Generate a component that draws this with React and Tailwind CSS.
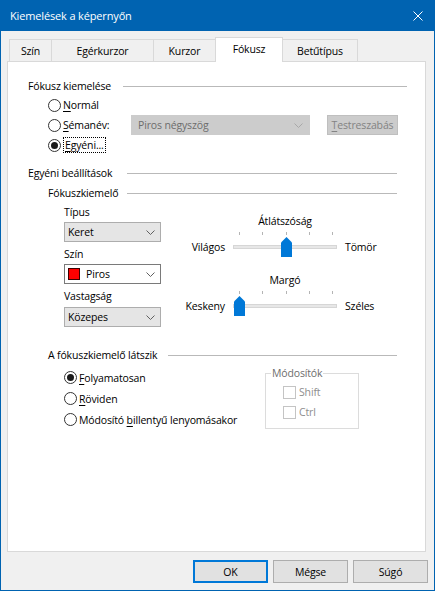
import React from "react";

function U({ children }) {
  return <span className="underline decoration-1 underline-offset-[2px]">{children}</span>;
}

function Chevron({ color = "#606060" }) {
  return (
    <svg width="9" height="5" viewBox="0 0 9 5" className="shrink-0">
      <path d="M0.5 0.5L4.5 4.5L8.5 0.5" fill="none" stroke={color} strokeWidth="1" />
    </svg>
  );
}

function Radio({ checked, children }) {
  return (
    <div className="flex items-center whitespace-nowrap">
      <span className="flex h-[13px] w-[13px] shrink-0 items-center justify-center rounded-full border border-[#333333] bg-white">
        {checked && <span className="h-[7px] w-[7px] rounded-full bg-[#1a1a1a]" />}
      </span>
      <span className="ml-[2px]">{children}</span>
    </div>
  );
}

function Header({ children, width, labelWidth, className = "" }) {
  return (
    <div className={`flex h-4 items-center ${width} ${className}`}>
      <span className={`shrink-0 whitespace-nowrap ${labelWidth}`}>{children}</span>
      <span className="h-px flex-1 bg-[#b9b9b9]" />
    </div>
  );
}

function Combo({ children, white }) {
  return (
    <div
      className={`flex h-[20px] w-[97px] items-center justify-between border pl-[3px] pr-[5px] ${
        white ? "border-[#7a7a7a] bg-white" : "border-[#adadad] bg-[#e5e5e5]"
      }`}
    >
      <div className="flex items-center">{children}</div>
      <Chevron />
    </div>
  );
}

function Slider({ label, left, right, pos }) {
  return (
    <div className="grid grid-cols-[50px_104px_auto] gap-x-2 whitespace-nowrap">
      <div />
      <div className="h-4 text-center">{label}</div>
      <div />
      <div />
      <div className="mt-[3px] flex h-[3px] justify-between pl-[6px] pr-[4px]">
        {[0, 1, 2, 3, 4].map((t) => (
          <span key={t} className="h-[3px] w-px bg-[#b4b4b4]" />
        ))}
      </div>
      <div />
      <div className="mt-[2px] flex h-[20px] items-center justify-end">{left}</div>
      <div className="relative mt-[2px] flex h-[20px] items-center">
        <div className="h-[4px] w-full border border-[#d6d6d6] bg-[#e7e7e7]" />
        <svg
          width="11"
          height="20"
          viewBox="0 0 11 20"
          className="absolute top-0"
          style={{ left: 1 + pos * 23.25 }}
        >
          <path d="M0 5.5L5.5 0L11 5.5V20H0Z" fill="#0078d7" />
        </svg>
      </div>
      <div className="mt-[2px] flex h-[20px] items-center">{right}</div>
    </div>
  );
}

function Check({ children }) {
  return (
    <div className="flex h-[20px] items-center">
      <span className="h-[13px] w-[13px] border border-[#c4c4c4] bg-white" />
      <span className="ml-[3px] text-[#8d8d8d]">{children}</span>
    </div>
  );
}

export default function App() {
  const tabs = [
    { name: "Szín", w: "w-[42px]" },
    { name: "Egérkurzor", w: "w-[102px]" },
    { name: "Kurzor", w: "w-[62px]" },
    { name: "Fókusz", w: "w-[68px]", active: true },
    { name: "Betűtípus", w: "w-[75px]" },
  ];

  return (
    <div className="flex h-[591px] w-[435px] flex-col border-x border-b border-[#0063b1] bg-[#f0f0f0] font-['Open_Sans','Noto_Sans',sans-serif] text-[10.5px] leading-4 tracking-[-0.15px] text-black">
      {/* Title bar */}
      <div className="-mx-px flex h-[31px] shrink-0 items-center justify-between bg-[#0063b1] pl-[10px] pr-[12px] text-[11px] text-white">
        <span>Kiemelések a képernyőn</span>
        <svg width="10" height="10" viewBox="0 0 10 10">
          <path d="M0.5 0.5L9.5 9.5M9.5 0.5L0.5 9.5" stroke="#ffffff" strokeWidth="1" />
        </svg>
      </div>

      <div className="px-[6px]">
        {/* Tabs */}
        <div className="relative z-10 mt-[6px] flex h-[24px] items-end pl-[2px]">
          {tabs.map((t, i) =>
            t.active ? (
              <div
                key={t.name}
                className={`-mb-px flex h-[25px] items-start justify-center border-x border-t border-[#d9d9d9] bg-white pt-[3px] ${t.w}`}
              >
                {t.name}
              </div>
            ) : (
              <div
                key={t.name}
                className={`flex h-[22px] items-center justify-center border-t border-[#d9d9d9] bg-[#f0f0f0] ${
                  i === 0 || tabs[i - 1].active ? "" : "border-l"
                } ${i === 0 ? "border-l" : ""} ${i === tabs.length - 1 ? "border-r" : ""} ${t.w}`}
              >
                {t.name}
              </div>
            )
          )}
        </div>

        {/* Panel */}
        <div className="h-[491px] w-[419px] border border-[#d9d9d9] bg-white pl-[20px] pt-[16px]">
          <Header width="w-[379px]" labelWidth="w-[95px]">
            Fókusz kiemelése
          </Header>
          <div className="ml-[20px] mt-px">
            <div className="flex h-[20px] items-center">
              <Radio>
                <U>N</U>ormál
              </Radio>
            </div>
            <div className="flex h-[20px] items-center">
              <div className="w-[83px]">
                <Radio>
                  <U>S</U>émanév:
                </Radio>
              </div>
              <div className="flex h-[20px] w-[179px] items-center justify-between border border-[#cccccc] bg-[#cccccc] pl-[6px] pr-[6px] text-[#6d6d6d]">
                <span>Piros négyszög</span>
                <Chevron color="#a8a8a8" />
              </div>
              <div className="ml-[17px] flex h-[20px] w-[71px] items-center justify-center whitespace-nowrap border border-[#bfbfbf] bg-[#cccccc] text-[#838383]">
                <span>
                  <U>T</U>estreszabás
                </span>
              </div>
            </div>
            <div className="flex h-[20px] items-center">
              <Radio checked>
                <span className="border border-dotted border-black px-px">
                  <U>E</U>gyéni...
                </span>
              </Radio>
            </div>
          </div>

          <Header width="w-[369px]" labelWidth="w-[99px]" className="mt-[10px]">
            Egyéni beállítások
          </Header>
          <Header width="w-[349px]" labelWidth="w-[79px]" className="ml-[20px] mt-[4px]">
            Fókuszkiemelő
          </Header>

          <div className="ml-[36px] mt-[3px] flex">
            <div className="w-[97px]">
              <div>Típus</div>
              <div className="mt-[2px]">
                <Combo>Keret</Combo>
              </div>
              <div className="mt-[4px]">Szín</div>
              <div className="mt-[2px]">
                <Combo white>
                  <span className="h-[12px] w-[12px] border border-[#3a0000] bg-[#ff0000]" />
                  <span className="ml-[6px]">Piros</span>
                </Combo>
              </div>
              <div className="mt-[4px]">Vastagság</div>
              <div className="mt-[3px]">
                <Combo>Közepes</Combo>
              </div>
            </div>
            <div className="ml-[14px] mt-[9px]">
              <Slider label="Átlátszóság" left="Világos" right="Tömör" pos={2} />
              <div className="mt-[15px]">
                <Slider label="Margó" left="Keskeny" right="Széles" pos={0} />
              </div>
            </div>
          </div>

          <Header width="w-[349px]" labelWidth="w-[120px]" className="ml-[20px] mt-[20px]">
            A fókuszkiemelő látszik
          </Header>

          <div className="ml-[36px] mt-[2px] flex">
            <div className="mt-[2px] w-[201px]">
              <div className="flex h-[21px] items-center">
                <Radio checked>
                  <U>F</U>olyamatosan
                </Radio>
              </div>
              <div className="flex h-[21px] items-center">
                <Radio>
                  <U>R</U>öviden
                </Radio>
              </div>
              <div className="flex h-[21px] items-center">
                <Radio>
                  Módosító <U>b</U>illentyű lenyomásakor
                </Radio>
              </div>
            </div>
            <fieldset className="h-[64px] w-[94px] border border-[#dcdcdc] pl-[17px]">
              <legend className="-ml-[12px] px-px text-[#6d6d6d]">Módosítók</legend>
              <div className="mt-px">
                <Check>Shift</Check>
                <Check>Ctrl</Check>
              </div>
            </fieldset>
          </div>
        </div>

        {/* Buttons */}
        <div className="mt-[8px] flex justify-end gap-[5px]">
          <button className="h-[23px] w-[75px] border-2 border-[#0078d7] bg-[#e1e1e1]">OK</button>
          <button className="h-[23px] w-[75px] border border-[#adadad] bg-[#e1e1e1]">Mégse</button>
          <button className="h-[23px] w-[75px] border border-[#adadad] bg-[#e1e1e1]">Súgó</button>
        </div>
      </div>
    </div>
  );
}
